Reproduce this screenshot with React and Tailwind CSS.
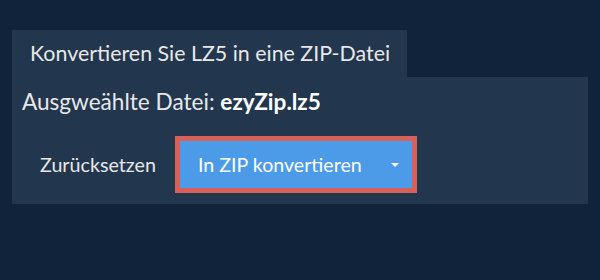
const App = () => {
    return (
        <div
            className="w-full h-[280px] bg-[#11233a] pt-[30px] px-[12px]"
            style={{ fontFamily: 'Lato, "Open Sans", sans-serif' }}
        >
            {/* Tab */}
            <div className="w-[395px] h-[47px] flex items-center pl-[18px] bg-[#22364d] text-[21.4px] text-[#e8e8e8]">
                Konvertieren Sie LZ5 in eine ZIP-Datei
            </div>

            {/* Panel */}
            <div className="w-[576px] h-[127px] bg-[#22364d] pl-[10px] pt-[10px]">
                <p className="text-[22.6px] leading-[30px] text-[#e8e8e8]">
                    Ausgweählte Datei: <span className="font-bold text-white">ezyZip.lz5</span>
                </p>

                <div className="flex items-center mt-[19px]">
                    <button className="pl-[18px] pr-[19px] text-[19.7px] text-[#e8e8e8]">
                        Zurücksetzen
                    </button>
                    <div className="border-[5px] border-[#d95f5a]">
                        <button className="w-[232px] h-[47px] flex items-center justify-between pl-[18px] pr-[13px] bg-[#4c9be8] text-[19.6px] text-white">
                            <span>In ZIP konvertieren</span>
                            <svg width="8" height="4" viewBox="0 0 8 4">
                                <path d="M0 0h8L4 4z" fill="#ffffff" />
                            </svg>
                        </button>
                    </div>
                </div>
            </div>
        </div>
    );
};

export default App;
